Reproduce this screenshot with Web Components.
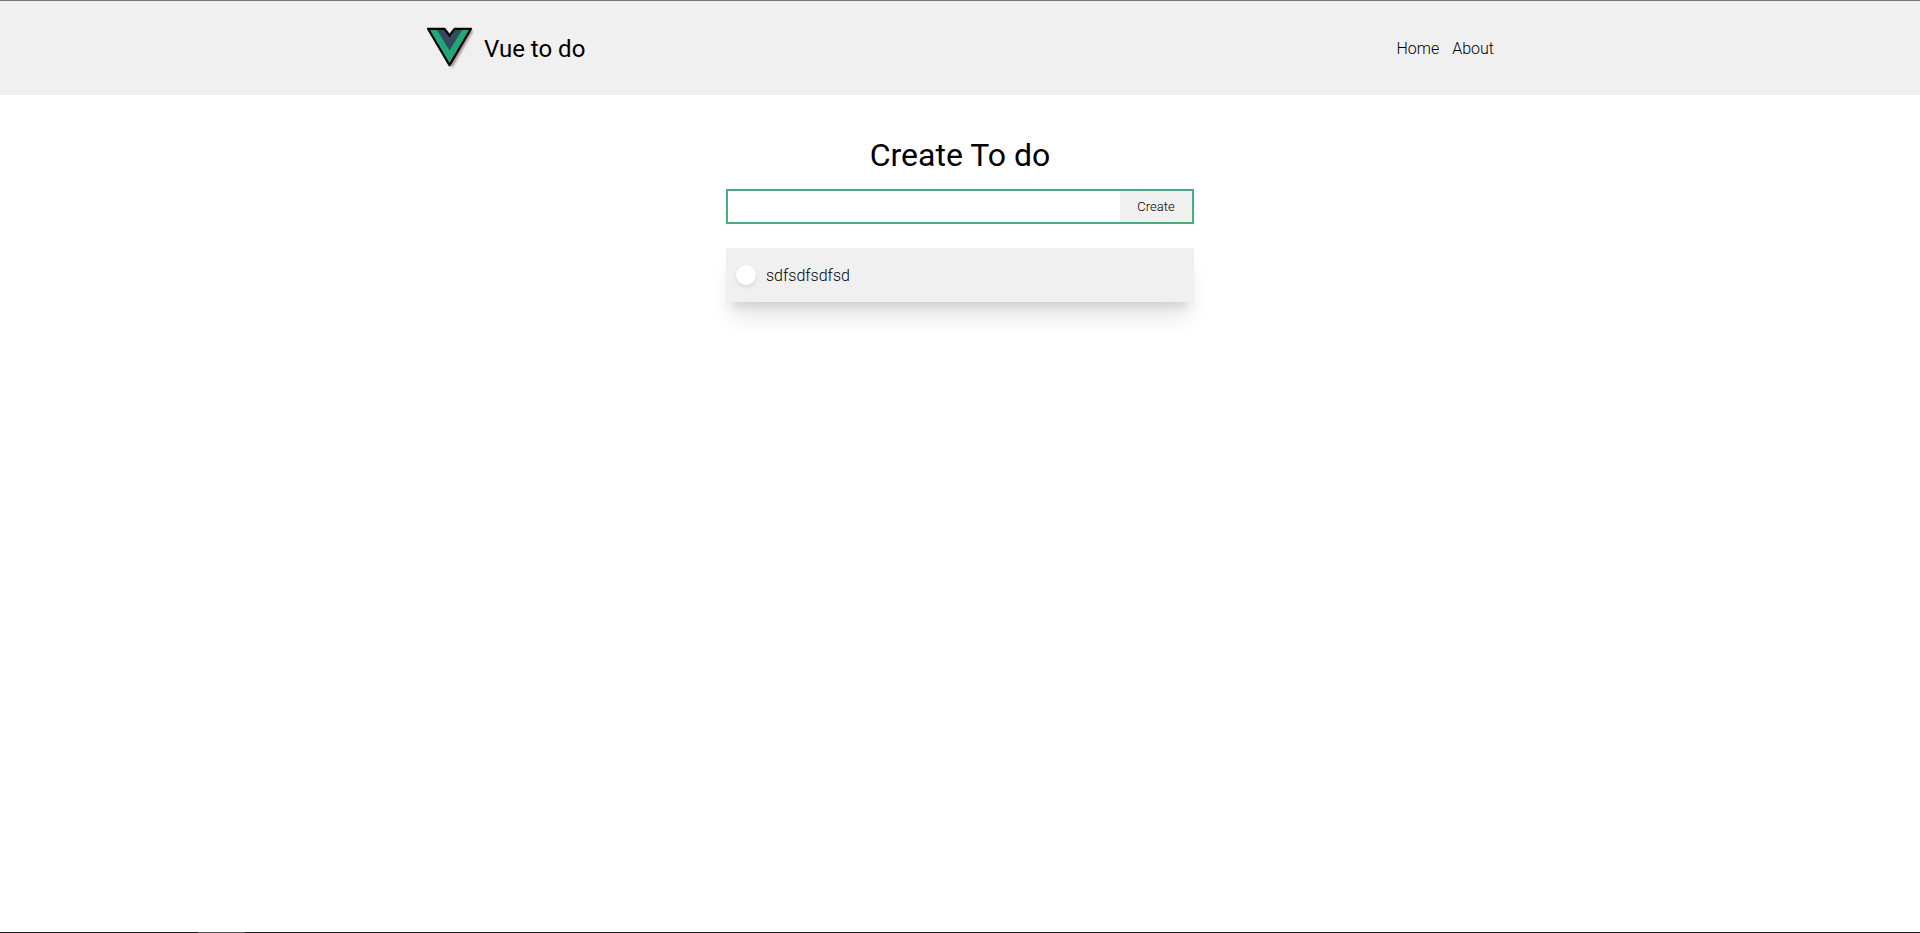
<!DOCTYPE html>
<html lang="en">
<head>
<meta charset="utf-8">
<meta name="viewport" content="width=device-width, initial-scale=1">
<title>Vue to do</title>
<style>
body { margin: 0; background: #fff; color: #000; font: 300 16px/20px Roboto, "Open Sans", sans-serif; }
</style>
</head>
<body>
<todo-app>
  <todo-header slot="header">
    <nav-link href="#home">Home</nav-link>
    <nav-link href="#about">About</nav-link>
  </todo-header>
  <todo-form></todo-form>
  <todo-item>sdfsdfsdfsd</todo-item>
</todo-app>
<script>
const define = (name, html) => {
  const template = document.createElement('template');
  template.innerHTML = html;
  customElements.define(name, class extends HTMLElement {
    constructor() {
      super();
      this.attachShadow({ mode: 'open' }).append(template.content.cloneNode(true));
    }
    connectedCallback() {
      const link = this.shadowRoot.querySelector('a');
      if (link && this.hasAttribute('href')) link.href = this.getAttribute('href');
    }
  });
};

define('vue-logo', `
  <style>
    :host { display: block; width: 46px; height: 42px; }
    svg { display: block; overflow: visible; }
  </style>
  <svg width="46" height="42" viewBox="0 0 46 42" aria-hidden="true">
    <path d="M4 2.500H47.500L26 40Z" fill="#6b3f46" opacity=".55" style="filter:blur(1px)"/>
    <path d="M2 1H45L23.500 37Z" fill="#21a579"/>
    <path d="M10.500 1H36.500L23.500 22.500Z" fill="#34495e"/>
    <path d="M17.500 -1L23.500 8 29.500 -1Z" fill="#f0f0f0"/>
    <path d="M2 .8H18.500L23.500 7.500 28.500 .8H45L23.500 37.200Z" fill="none" stroke="#000" stroke-width="2.200" stroke-linejoin="round"/>
  </svg>`);

define('nav-link', `
  <style>
    :host { display: block; }
    a { color: inherit; text-decoration: none; }
  </style>
  <a><slot></slot></a>`);

define('todo-header', `
  <style>
    :host { display: block; background: #f0f0f0; border-top: 1px solid #6f7974; }
    .bar { display: flex; align-items: center; justify-content: space-between; box-sizing: border-box;
      max-width: 1100px; height: 94px; margin: 0 auto; padding: 2px 16px 0; }
    .brand { display: flex; align-items: center; gap: 12px; color: inherit; text-decoration: none; }
    .name { font-size: 24px; line-height: 32px; font-weight: 400; }
    nav { display: flex; gap: 13px; }
  </style>
  <header class="bar">
    <a class="brand" href="#"><vue-logo></vue-logo><span class="name">Vue to do</span></a>
    <nav><slot></slot></nav>
  </header>`);

define('todo-form', `
  <style>
    :host { display: block; }
    h1 { margin: 0 0 14px; font-size: 32px; line-height: 40px; font-weight: 400; text-align: center; }
    form { display: flex; border: 2px solid #4dab80; height: 31px; }
    input { flex: 1; min-width: 0; border: 0; outline: 0; padding: 0 8px; background: #fff; font: inherit; }
    button { border: 0; width: 72px; padding: 0; background: #f0f0f0; color: inherit; font: inherit; font-size: 13px; }
  </style>
  <h1 id="title">Create To do</h1>
  <form onsubmit="return false">
    <input type="text" aria-labelledby="title">
    <button>Create</button>
  </form>`);

define('todo-item', `
  <style>
    :host { display: block; margin-top: 24px; background: #f0f0f0;
      box-shadow: 0 20px 25px -5px rgba(0,0,0,.1), 0 10px 10px -5px rgba(0,0,0,.1); }
    label { display: flex; align-items: center; gap: 10px; height: 54px; padding: 0 10px; }
    input { appearance: none; flex: none; width: 20px; height: 20px; margin: 0; border-radius: 50%;
      background: #fff; box-shadow: 0 2px 4px rgba(0,0,0,.1); }
    span { padding-top: 2px; }
  </style>
  <label><input type="checkbox"><span><slot></slot></span></label>`);

define('todo-app', `
  <style>
    :host { display: flex; flex-direction: column; min-height: 100vh; }
    main { flex: 1; box-sizing: border-box; width: 100%; max-width: 500px; margin: 0 auto; padding: 40px 16px; }
    footer { height: 1px; background: linear-gradient(#555, #555) 198px 0 / 47px 1px no-repeat #1a171b; }
  </style>
  <slot name="header"></slot>
  <main><slot></slot></main>
  <footer></footer>`);
</script>
</body>
</html>
